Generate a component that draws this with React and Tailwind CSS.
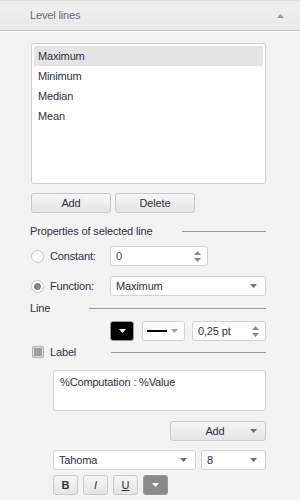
import React from "react";

const Arrow = ({ color = "#6f6f6f" }) => (
  <svg width="7" height="4" viewBox="0 0 7 4">
    <path d="M0 0 L7 0 L3.5 4 Z" fill={color} />
  </svg>
);

const Spinner = () => (
  <svg width="7" height="11" viewBox="0 0 7 11">
    <path d="M0 4 L7 4 L3.5 0 Z" fill="#8a8a8a" />
    <path d="M0 7 L7 7 L3.5 11 Z" fill="#8a8a8a" />
  </svg>
);

const Radio = ({ checked }) => (
  <span className="w-[13px] h-[13px] rounded-full border border-[#c4c4c4] bg-white flex items-center justify-center">
    {checked && <span className="w-[7px] h-[7px] rounded-full bg-[#8a8a8a] border border-[#6f6f6f]" />}
  </span>
);

const Field = ({ className = "", children }) => (
  <div
    className={`h-5 bg-white border border-[#d3d3d3] rounded-[3px] flex items-center ${className}`}
  >
    {children}
  </div>
);

const Btn = ({ className = "", children }) => (
  <div
    className={`h-5 border border-[#c9c9c9] rounded-[3px] bg-gradient-to-b from-[#f7f7f7] to-[#e4e4e4] flex items-center justify-center ${className}`}
  >
    {children}
  </div>
);

const Divider = ({ className = "" }) => <div className={`h-px bg-[#9a9a9a] ${className}`} />;

export default function App() {
  const items = ["Maximum", "Minimum", "Median", "Mean"];

  return (
    <div
      className="w-[300px] h-[500px] bg-[#f3f3f3] text-[11px] tracking-[-0.15px] text-[#30303c] overflow-hidden"
      style={{ fontFamily: '"Liberation Sans", Arial, sans-serif' }}
    >
      {/* header */}
      <div className="h-[31px] border-t border-[#dcdcdc] border-b border-b-[#c6c6c6] bg-gradient-to-b from-[#f0f0f0] to-[#e9e9e9] flex items-center pl-[30px] pr-[16px] shadow-[0_1px_0_#ffffff]">
        <span className="text-[#6a6a72] flex-1">Level lines</span>
        <svg width="7" height="4" viewBox="0 0 7 4">
          <path d="M0 4 L7 4 L3.5 0 Z" fill="#9a9a9a" />
        </svg>
      </div>

      <div className="pl-[31px] pr-[34px] flex flex-col">
        {/* list */}
        <div className="mt-[12px] h-[141px] bg-white border border-[#d0d0d0] rounded-[3px] p-[2px]">
          {items.map((it, i) => (
            <div
              key={it}
              className={`h-5 flex items-center pl-[4px] ${i === 0 ? "bg-[#e4e4e4]" : ""}`}
            >
              {it}
            </div>
          ))}
        </div>

        <div className="mt-[9px] flex gap-[4px]">
          <Btn className="w-[80px]">Add</Btn>
          <Btn className="w-[80px]">Delete</Btn>
        </div>

        <div className="mt-[10px] h-4 flex items-center">
          <span className="-ml-px">Properties of selected line</span>
          <Divider className="ml-auto w-[84px]" />
        </div>

        <div className="mt-[7px] flex items-center">
          <Radio />
          <span className="ml-[6px] w-[60px]">Constant:</span>
          <Field className="w-[98px] pl-[5px] pr-[6px] justify-between">
            <span className="text-[#555]">0</span>
            <Spinner />
          </Field>
        </div>

        <div className="mt-[10px] flex items-center">
          <Radio checked />
          <span className="ml-[6px] w-[60px]">Function:</span>
          <Field className="flex-1 pl-[5px] pr-[8px] justify-between">
            <span>Maximum</span>
            <Arrow />
          </Field>
        </div>

        <div className="mt-[5px] h-[14px] flex items-center">
          <span className="-ml-px">Line</span>
          <Divider className="ml-auto w-[177px]" />
        </div>

        <div className="mt-[6px] flex items-center pl-[79px]">
          <div className="w-[24px] h-5 bg-black border border-[#9a9a9a] rounded-[3px] flex items-center justify-center">
            <Arrow color="#ffffff" />
          </div>
          <Field className="ml-[8px] w-[43px] pl-[4px] pr-[6px] justify-between">
            <span className="w-[20px] h-[2px] bg-black" />
            <Arrow color="#a0a0a0" />
          </Field>
          <Field className="ml-[7px] flex-1 pl-[5px] pr-[6px] justify-between">
            <span>0,25 pt</span>
            <Spinner />
          </Field>
        </div>

        <div className="mt-[4px] h-[14px] flex items-center">
          <span className="w-[12px] h-[12px] ml-px rounded-[2px] border border-[#b8b8b8] bg-[#9e9e9e] shadow-[inset_0_0_0_1px_#d8d8d8]" />
          <span className="ml-[6px]">Label</span>
          <Divider className="ml-auto w-[155px]" />
        </div>

        <div className="mt-[11px] ml-[22px] h-[41px] bg-white border border-[#d3d3d3] rounded-[3px] px-[6px] pt-[3px]">
          %Computation : %Value
        </div>

        <div className="mt-[10px] flex justify-end">
          <Btn className="w-[96px] relative">
            <span className="ml-[-6px]">Add</span>
            <span className="absolute right-[8px] top-[7px] flex">
              <Arrow />
            </span>
          </Btn>
        </div>

        <div className="mt-[9px] ml-[22px] flex gap-[5px]">
          <Field className="w-[143px] pl-[5px] pr-[8px] justify-between">
            <span>Tahoma</span>
            <Arrow />
          </Field>
          <Field className="flex-1 pl-[5px] pr-[8px] justify-between">
            <span>8</span>
            <Arrow />
          </Field>
        </div>

        <div className="mt-[5px] ml-[22px] flex gap-[5px]">
          <Btn className="w-[25px] font-bold">B</Btn>
          <Btn className="w-[25px] italic">I</Btn>
          <Btn className="w-[25px] underline">U</Btn>
          <div className="w-[25px] h-5 border border-[#9a9a9a] rounded-[3px] bg-[#8a8a8a] flex items-center justify-center">
            <Arrow color="#ffffff" />
          </div>
        </div>
      </div>
    </div>
  );
}
